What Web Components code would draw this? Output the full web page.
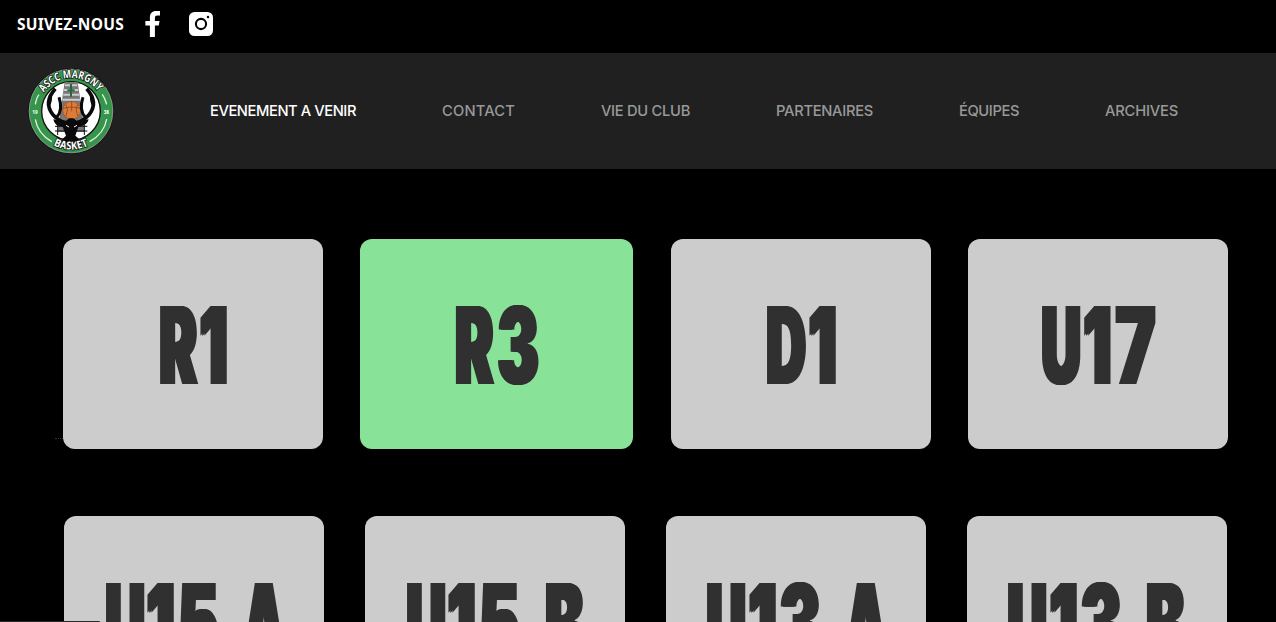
<!DOCTYPE html>
<html lang="fr">
<head>
<meta charset="utf-8">
<title>ASCC Margny Basket</title>
<style>
html,body{margin:0;background:#000;height:622px;overflow:hidden}
body{font-family:"Open Sans","Liberation Sans",sans-serif}
</style>
</head>
<body>
<club-page></club-page>
<script>
const define=(name,html,init)=>customElements.define(name,class extends HTMLElement{
  connectedCallback(){
    if(this.shadowRoot)return;
    this.attachShadow({mode:'open'}).innerHTML=html;
    if(init)init.call(this,this.shadowRoot);
  }
});

/* Label that spreads its tracking to occupy a given width */
define('fit-label',`<style>:host{display:block;white-space:nowrap}span{display:inline-block}</style><span></span>`,function(root){
  const s=root.querySelector('span'),w=+this.getAttribute('width');
  s.textContent=this.getAttribute('text');
  this.style.width=w+'px';
  s.style.letterSpacing=(w-s.getBoundingClientRect().width)/s.textContent.length+'px';
});

define('social-bar',`<style>
:host{display:flex;align-items:center;height:53px;box-sizing:border-box;padding:0 0 5px 17px;background:#000;color:#fff}
fit-label{font:700 15.5px/22px "Noto Sans",sans-serif}
.fb{margin-left:21px}.ig{margin-left:29px}svg{display:block}
</style>
<fit-label text="SUIVEZ-NOUS" width="107"></fit-label>
<svg class="fb" width="15" height="26" viewBox="0 0 15 26"><path fill="#fff" d="M4.9 26V14.5H.4V10h4.5V6.5C4.9 2.3 7.2 0 10.9 0h4.1v4.4h-2.5c-1.9 0-2.6.8-2.6 2.5V10h4.6l-.7 4.5H9.9V26z"/></svg>
<svg class="ig" width="24" height="24" viewBox="0 0 24 24"><rect width="24" height="24" rx="5.5" fill="#fff"/><circle cx="12" cy="12" r="5.1" fill="none" stroke="#000" stroke-width="2.1"/><circle cx="19" cy="5" r="1.2" fill="#000"/></svg>`);

define('club-logo',`<style>:host{display:block;width:86px;height:86px}svg{display:block}text{font-family:"Open Sans",sans-serif;font-weight:700;fill:#fff}</style>
<svg width="86" height="86" viewBox="24 24 258 258">
<defs><path id="top" d="M72 98A98 98 0 0 1 236 98"/><path id="bottom" d="M100 256A116 116 0 0 0 206 256"/></defs>
<circle cx="153" cy="153" r="129" fill="#111"/><circle cx="153" cy="153" r="125.5" fill="#35954a" stroke="#b4c0b6" stroke-width="2"/>
<circle cx="153" cy="153" r="88" fill="#fff" stroke="#111" stroke-width="4"/>
<path d="M134 66h39l22 150h-83z" fill="#777"/><path d="M135 76h37M132 90h43M130 104h47M127 119h53" stroke="#ccc" stroke-width="6"/>
<path d="M105 199h32M168 199h34M105 213h32M168 213h34M113 190v35M193 190v35" stroke="#111" stroke-width="3"/>
<path d="M153 72v38M142 91h22" stroke="#27683b" stroke-width="6"/>
<circle cx="155" cy="151" r="27" fill="#dc7c38" stroke="#944c20" stroke-width="2"/><path d="M129 145q26-9 52 0M155 124v30M138 134q9 14 0 34M173 134q-9 14 0 34" fill="none" stroke="#884824" stroke-width="2.5"/>
<g fill="none" stroke="#0a0a0a" stroke-width="11" stroke-linejoin="round"><path d="M138 190Q112 180 98 163Q70 126 106 86M168 190Q194 180 208 163Q236 126 200 86"/><path stroke-width="9" d="M110 172Q130 151 117 112M196 172Q176 151 189 112M84 138Q94 124 91 104M222 138Q212 124 215 104"/></g>
<path d="M100 178l38 4 10-7h12l10 7 36-4q-4 20-31 22l-9 27q13 10 21 20h-66q6-12 17-20l-10-27q-25-1-28-22z" fill="#0a0a0a"/><path d="M138 196l9 5M171 196l-9 5" stroke="#fff" stroke-width="3"/>
<g fill="none" stroke="#e8eee8" stroke-width="4"><path d="M46 133Q49 114 57 104M247 103q9 14 13 30M46 178q7 42 49 67M260 177q-7 43-51 68"/></g>
<text x="37" y="161" font-size="14">19</text><text x="251" y="161" font-size="14">38</text>
<g style="paint-order:stroke" stroke="#111" stroke-width="5"><text font-size="33"><textPath href="#top" textLength="190" lengthAdjust="spacingAndGlyphs">ASCC MARGNY</textPath></text>
<text font-size="33"><textPath href="#bottom" textLength="109" lengthAdjust="spacingAndGlyphs">BASKET</textPath></text></g>
</svg>`);

define('main-nav',`<style>
:host{display:flex;align-items:center;height:116px;box-sizing:border-box;padding-left:28px;background:#202020;color:#999}
nav{display:flex;gap:86px;margin-left:96px}
fit-label{font:530 14.7px/24px Inter,sans-serif}.active{color:#fff}
</style><club-logo></club-logo><nav>
<fit-label class="active" text="EVENEMENT A VENIR" width="146"></fit-label>
<fit-label text="CONTACT" width="73"></fit-label>
<fit-label text="VIE DU CLUB" width="89"></fit-label>
<fit-label text="PARTENAIRES" width="97"></fit-label>
<fit-label text="ÉQUIPES" width="60"></fit-label>
<fit-label text="ARCHIVES" width="73"></fit-label>
</nav>`);

/* Each "left:width" pair of the glyphs attribute sets the inked box of one letter */
define('team-card',`<style>
:host{display:block;width:260px;height:210px;border-radius:12px;background:#ccc;overflow:hidden}
:host([active]){width:273px;background:#88e297}
svg{display:block;width:100%;height:100%}
text{font:900 107.3px Inter,sans-serif;fill:#303030;filter:drop-shadow(2px 0 0 #303030) drop-shadow(-2px 0 0 #303030)}
</style><svg><text y="145" xml:space="preserve"></text></svg>`,function(root){
  const t=root.querySelector('text'),boxes=this.getAttribute('glyphs').split(' ');
  const c=document.createElement('canvas').getContext('2d');
  c.font='900 107.3px Inter, sans-serif';
  let i=0;
  for(const ch of this.getAttribute('label')){
    if(ch===' '){t.append(' ');continue}
    const [x,w]=boxes[i++].split(':').map(Number),m=c.measureText(ch);
    const s=(w-4)/(m.actualBoundingBoxRight+m.actualBoundingBoxLeft);
    const g=document.createElementNS('http://www.w3.org/2000/svg','tspan');
    g.setAttribute('x',x+2+m.actualBoundingBoxLeft*s);
    g.setAttribute('textLength',m.width*s);
    g.setAttribute('lengthAdjust','spacingAndGlyphs');
    g.textContent=ch;t.append(g);
  }
});

define('card-row',`<style>:host{display:flex;justify-content:space-between}</style><slot></slot>`);

define('club-page',`<style>
:host{display:block;position:relative;height:622px;overflow:hidden;background:#000}
main{display:flex;flex-direction:column;gap:67px;padding:70px 48px 0 63px}
.second{padding:0 1px}
.status{position:absolute;left:0;bottom:0;width:100px;height:1px;background:#292929;border-radius:0 1px 0 0}
.speck{position:absolute;left:55px;top:438px;width:8px;height:0;border-top:1px dotted #333}
</style>
<social-bar></social-bar><main-nav></main-nav>
<main>
<card-row>
<team-card label="R1" glyphs="97:38.5 137:27"></team-card>
<team-card active label="R3" glyphs="96:39 137.5:41.5"></team-card>
<team-card label="D1" glyphs="96:39 138:27"></team-card>
<team-card label="U17" glyphs="74:38.5 115.7:27 147:40.5"></team-card>
</card-row>
<card-row class="second">
<team-card label="U15 A" glyphs="42:38.5 83:27 115:39.5 178.5:43"></team-card>
<team-card label="U15 B" glyphs="42:38.5 83:27 115:39.5 181:39"></team-card>
<team-card label="U13 A" glyphs="41:38.5 83:27 113.5:41.5 178.5:43"></team-card>
<team-card label="U13 B" glyphs="41:38.5 83:27 113.5:41.5 180:39"></team-card>
</card-row>
</main><div class="status"></div><div class="speck"></div>`);
</script>
</body>
</html>
